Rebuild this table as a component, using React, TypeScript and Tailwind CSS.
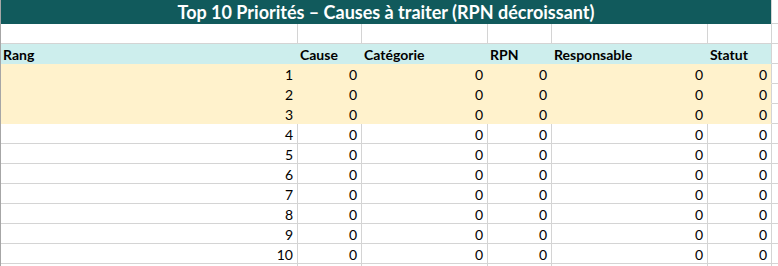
const widths = ["w-[297px]", "w-[64px]", "w-[126px]", "w-[64px]", "w-[156px]", "w-[64px]"];
const headers = ["Rang", "Cause", "Catégorie", "RPN", "Responsable", "Statut"];

type Tone = "white" | "head" | "gold";

const tones: Record<Tone, string> = {
  white: "bg-white border-[#d4d4d4]",
  head: "bg-[#cdeeed] border-[#cdeeed]",
  gold: "bg-[#fff2cc] border-[#fff2cc]",
};

function Row({ cells, tone, align = "right", bold = false }: { cells: string[]; tone: Tone; align?: "left" | "right"; bold?: boolean }) {
  return (
    <div className="flex h-[20px]">
      {widths.map((w, i) => (
        <div
          key={i}
          className={`${w} shrink-0 border-b ${i === 5 ? "border-r-[#d4d4d4]" : ""} border-r ${tones[tone]} flex items-end pb-[1px] overflow-hidden whitespace-nowrap ${
            align === "right" ? "justify-end pr-[4px]" : "justify-start pl-[2px]"
          } ${bold ? "font-bold" : ""}`}
        >
          {cells[i]}
        </div>
      ))}
      <div className="flex-1 border-b border-[#d4d4d4]" />
    </div>
  );
}

export default function App() {
  const ranks = Array.from({ length: 10 }, (_, i) => i + 1);

  return (
    <div className="w-[778px] h-[266px] overflow-hidden bg-white border-l border-[#a6a6a6] text-[14px] leading-none text-black font-['Lato',sans-serif]">
      <div className="flex h-[24px]">
        <div className="w-[770px] shrink-0 bg-[#115a5c] flex items-center justify-center text-white font-bold text-[18px]">
          Top 10 Priorités – Causes à traiter (RPN décroissant)
        </div>
        <div className="flex-1 border-l border-b border-[#d4d4d4]" />
      </div>
      <Row cells={["", "", "", "", "", ""]} tone="white" />
      <Row cells={headers} tone="head" align="left" bold />
      {ranks.map((r) => (
        <Row key={r} cells={[String(r), "0", "0", "0", "0", "0"]} tone={r <= 3 ? "gold" : "white"} />
      ))}
      <Row cells={["", "", "", "", "", ""]} tone="white" />
    </div>
  );
}
